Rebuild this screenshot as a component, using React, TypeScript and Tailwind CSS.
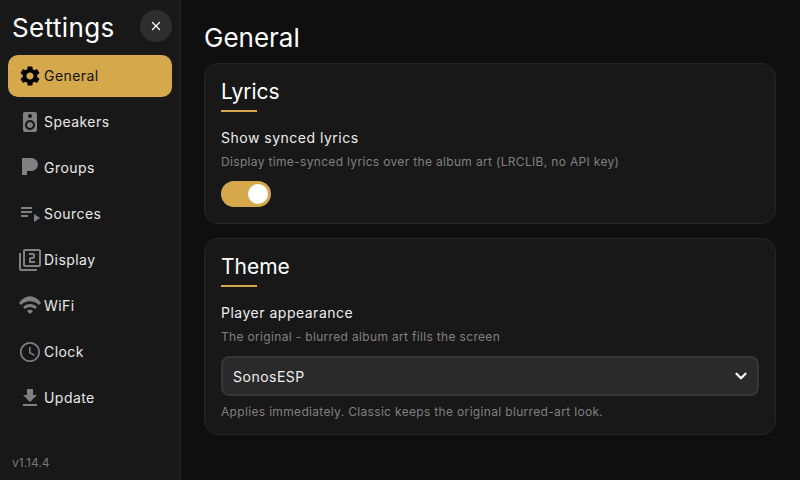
import { X, ChevronDown } from "lucide-react";
import type { ReactNode } from "react";

const FONT = "font-['Inter','Liberation_Sans',sans-serif]";

function Icon({ children }: { children: ReactNode }) {
  return (
    <svg viewBox="0 0 24 24" fill="currentColor" className="h-6 w-6 shrink-0">
      {children}
    </svg>
  );
}

const NAV_ITEMS: { label: string; icon: ReactNode }[] = [
  {
    label: "General",
    icon: (
      <path d="M19.14 12.94c.04-.3.06-.61.06-.94 0-.32-.02-.64-.07-.94l2.03-1.58c.18-.14.23-.41.12-.61l-1.92-3.32c-.12-.22-.37-.29-.59-.22l-2.39.96c-.5-.38-1.03-.7-1.62-.94l-.36-2.54c-.04-.24-.24-.41-.48-.41h-3.84c-.24 0-.43.17-.47.41l-.36 2.54c-.59.24-1.13.57-1.62.94l-2.39-.96c-.22-.08-.47 0-.59.22L2.74 8.87c-.12.21-.08.47.12.61l2.03 1.58c-.05.3-.09.63-.09.94s.02.64.07.94l-2.03 1.58c-.18.14-.23.41-.12.61l1.92 3.32c.12.22.37.29.59.22l2.39-.96c.5.38 1.03.7 1.62.94l.36 2.54c.05.24.24.41.48.41h3.84c.24 0 .44-.17.47-.41l.36-2.54c.59-.24 1.13-.56 1.62-.94l2.39.96c.22.08.47 0 .59-.22l1.92-3.32c.12-.22.07-.47-.12-.61l-2.01-1.58zM12 15.6c-1.98 0-3.6-1.62-3.6-3.6s1.62-3.6 3.6-3.6 3.6 1.62 3.6 3.6-1.62 3.6-3.6 3.6z" />
    ),
  },
  {
    label: "Speakers",
    icon: (
      <path d="M17 2H7c-1.1 0-2 .9-2 2v16c0 1.1.9 1.99 2 1.99L17 22c1.1 0 2-.9 2-2V4c0-1.1-.9-2-2-2zm-5 2c1.1 0 2 .9 2 2s-.9 2-2 2c-1.11 0-2-.9-2-2s.89-2 2-2zm0 16c-2.76 0-5-2.24-5-5s2.24-5 5-5 5 2.24 5 5-2.24 5-5 5zm0-8c-1.66 0-3 1.34-3 3s1.34 3 3 3 3-1.34 3-3-1.34-3-3-3z" />
    ),
  },
  {
    label: "Groups",
    icon: <path d="M4 2h9.500a6.500 6.500 0 0 1 0 13H9v4H4z" />,
  },
  {
    label: "Sources",
    icon: <path d="M3 5h11v2H3zm0 4h11v2H3zm0 4h7v2H3zm13-1v8l6-4z" />,
  },
  {
    label: "Display",
    icon: (
      <path d="M3 5H1v16c0 1.100.9 2 2 2h16v-2H3V5zm18-4H7c-1.100 0-2 .9-2 2v14c0 1.100.9 2 2 2h14c1.100 0 2-.9 2-2V3c0-1.100-.9-2-2-2zm0 16H7V3h14v14zm-4-4h-4v-2h2c1.100 0 2-.89 2-2V7c0-1.110-.9-2-2-2h-4v2h4v2h-2c-1.100 0-2 .89-2 2v4h6v-2z" />
    ),
  },
  {
    label: "WiFi",
    icon: (
      <path d="M1 9l2 2c5-5 13-5 18 0l2-2C17-.1 7-.1 1 9zm4 4 2 2c2.800-2.800 7.200-2.800 10 0l2-2c-3.900-3.900-10.100-3.900-14 0zm4 4 3 3 3-3c-1.700-1.700-4.300-1.700-6 0z" />
    ),
  },
  {
    label: "Clock",
    icon: (
      <path d="M11.990 2C6.470 2 2 6.480 2 12s4.470 10 9.990 10C17.520 22 22 17.520 22 12S17.520 2 11.990 2zM12 20.300c-4.600 0-8.300-3.700-8.300-8.300S7.400 3.700 12 3.700s8.300 3.700 8.300 8.300-3.700 8.300-8.300 8.300zM12.500 7H11v6l5 3 .75-1.230-4.250-2.520z" />
    ),
  },
  {
    label: "Update",
    icon: <path d="M19 9h-4V3H9v6H5l7 7 7-7zM5 18v2h14v-2z" />,
  },
];

function NavItem({ label, icon, active }: { label: string; icon: ReactNode; active?: boolean }) {
  return (
    <div
      className={`flex h-[42px] items-center gap-[2px] rounded-[10px] pl-[10px] text-[14px] tracking-[0.45px] ${
        active ? "bg-[#d4a84b] text-[#111111]" : "text-[#e8e8e8]"
      }`}
    >
      <span className={active ? "text-black" : "text-[#808080]"}>
        <Icon>{icon}</Icon>
      </span>
      <span className="pb-[2px]">{label}</span>
    </div>
  );
}

function Card({ title, children }: { title: string; children: ReactNode }) {
  return (
    <section className="rounded-[14px] border border-[#262626] bg-[#181818] px-4 pt-[15px] pb-[14px]">
      <h2 className="text-[21px] leading-[26px] font-normal text-white">{title}</h2>
      <div className="mt-[5px] mb-[17px] h-[2px] w-9 bg-[#d4a84b]" />
      {children}
    </section>
  );
}

export default function App() {
  return (
    <div className={`flex h-[480px] w-[800px] overflow-hidden bg-[#0f0f0f] ${FONT}`}>
      <aside className="flex w-[181px] shrink-0 flex-col border-r border-[#242424] bg-[#181818]">
        <div className="flex items-start justify-between pt-[10px] pr-2 pl-3">
          <h1 className="pt-[2px] text-[26px] leading-8 font-normal tracking-[0.4px] text-white">Settings</h1>
          <button className="flex h-8 w-8 items-center justify-center rounded-full bg-[#2e2e2e] text-white">
            <X className="h-[14px] w-[14px]" strokeWidth={2.25} />
          </button>
        </div>
        <nav className="mt-[11px] flex flex-col gap-1 px-2">
          {NAV_ITEMS.map((item, i) => (
            <NavItem key={item.label} label={item.label} icon={item.icon} active={i === 0} />
          ))}
        </nav>
        <div className="mt-auto pb-[9px] pl-3 text-[12px] leading-4 text-[#777777]">v1.14.4</div>
      </aside>

      <main className="flex min-w-0 flex-1 flex-col pt-[22px] pr-6 pl-[23px]">
        <h1 className="mb-[9px] text-[26px] leading-8 font-normal text-white">General</h1>
        <div className="flex flex-col gap-[14px]">
          <Card title="Lyrics">
            <div className="text-[14px] leading-[18px] tracking-[0.5px] text-[#eeeeee]">Show synced lyrics</div>
            <p className="mt-[7px] text-[12px] leading-4 tracking-[0.33px] text-[#808080]">
              Display time-synced lyrics over the album art (LRCLIB, no API key)
            </p>
            <div className="mt-[11px] mb-[2px] flex h-[26px] w-[50px] items-center justify-end rounded-full bg-[#d4a84b] pr-[3px]">
              <div className="h-5 w-5 rounded-full bg-white" />
            </div>
          </Card>
          <Card title="Theme">
            <div className="text-[14px] leading-[18px] tracking-[0.5px] text-[#eeeeee]">Player appearance</div>
            <p className="mt-[7px] text-[12px] leading-4 tracking-[0.33px] text-[#808080]">
              The original - blurred album art fills the screen
            </p>
            <div className="mt-[11px] flex h-10 items-center justify-between rounded-[8px] border-2 border-[#363636] bg-[#2a2a2a] pr-[7px] pl-[10px] text-[14px] tracking-[0.5px] text-[#eeeeee]">
              SonosESP
              <ChevronDown className="h-[18px] w-[18px] text-white" strokeWidth={3} />
            </div>
            <p className="mt-2 text-[12px] leading-4 tracking-[0.33px] text-[#808080]">
              Applies immediately. Classic keeps the original blurred-art look.
            </p>
          </Card>
        </div>
      </main>
    </div>
  );
}
